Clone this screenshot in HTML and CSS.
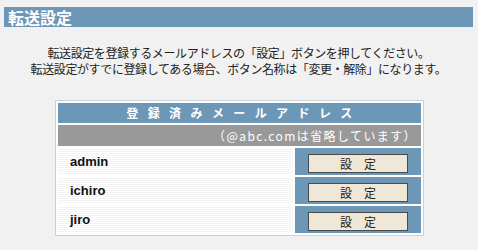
FILE: index.html
```html
<!DOCTYPE html>
<html lang="ja">
<head>
<meta charset="utf-8">
<title>転送設定</title>
<link rel="stylesheet" href="styles.css">
</head>
<body>
<div class="page">
  <h1 class="title">転送設定</h1>
  <p class="intro">転送設定を登録するメールアドレスの「設定」ボタンを押してください。<br>転送設定がすでに登録してある場合、ボタン名称は「変更・解除」になります。</p>
  <table class="list">
    <thead>
      <tr><th colspan="2" class="list-head">登録済みメールアドレス</th></tr>
      <tr><td colspan="2" class="list-note">（@abc.comは省略しています）</td></tr>
    </thead>
    <tbody>
      <tr>
        <td class="name">admin</td>
        <td class="action"><button class="btn" type="button">設　定</button></td>
      </tr>
      <tr>
        <td class="name">ichiro</td>
        <td class="action"><button class="btn" type="button">設　定</button></td>
      </tr>
      <tr>
        <td class="name">jiro</td>
        <td class="action"><button class="btn" type="button">設　定</button></td>
      </tr>
    </tbody>
  </table>
</div>
</body>
</html>
```
FILE: styles.css
```css
html, body {
  margin: 0;
  padding: 0;
  background: #f1f1f1;
}
.page {
  font-family: "Noto Sans CJK JP", "Liberation Sans", sans-serif;
  color: #222;
  padding: 7px 5px 0 4px;
}
.title {
  margin: 0;
  height: 20px;
  line-height: 20px;
  background: #6d97b6;
  color: #fff;
  font-size: 16px;
  font-weight: bold;
  padding-left: 4px;
}
.intro {
  margin: 18px 0 0;
  text-align: center;
  font-size: 12px;
  line-height: 16px;
  letter-spacing: -0.4px;
}
.list {
  margin: 23px 0 0 51px;
  width: 369px;
  border: 1px solid #c4d2de;
  background: #fff;
  border-spacing: 2px;
}
.list td, .list th {
  padding: 0;
}
.list-head {
  height: 20px;
  background: #6d97b6;
  color: #fff;
  font-size: 12px;
  font-weight: bold;
  letter-spacing: 9.4px;
  padding-left: 9px !important;
  text-align: center;
  line-height: 20px;
}
.list-note {
  height: 21px;
  background: #999;
  color: #fff;
  font-size: 12px;
  letter-spacing: 1.4px;
  text-align: right;
  padding-right: 4px !important;
  line-height: 21px;
}
.name {
  height: 27px;
  padding-left: 12px !important;
  font-family: "Liberation Sans", sans-serif;
  font-weight: bold;
  font-size: 13px;
  color: #111;
  background: repeating-linear-gradient(to bottom, #fff 0 1px, #f3f3f3 1px 2px);
}
.action {
  width: 126px;
  background: #6d97b6;
  text-align: center;
}
.btn {
  width: 100px;
  height: 19px;
  margin: 0;
  padding: 0;
  border: 1px solid #4a4a4a;
  background: #efe7d7;
  color: #222;
  font-family: "Noto Sans CJK JP", sans-serif;
  font-size: 12px;
  line-height: 17px;
}
```
